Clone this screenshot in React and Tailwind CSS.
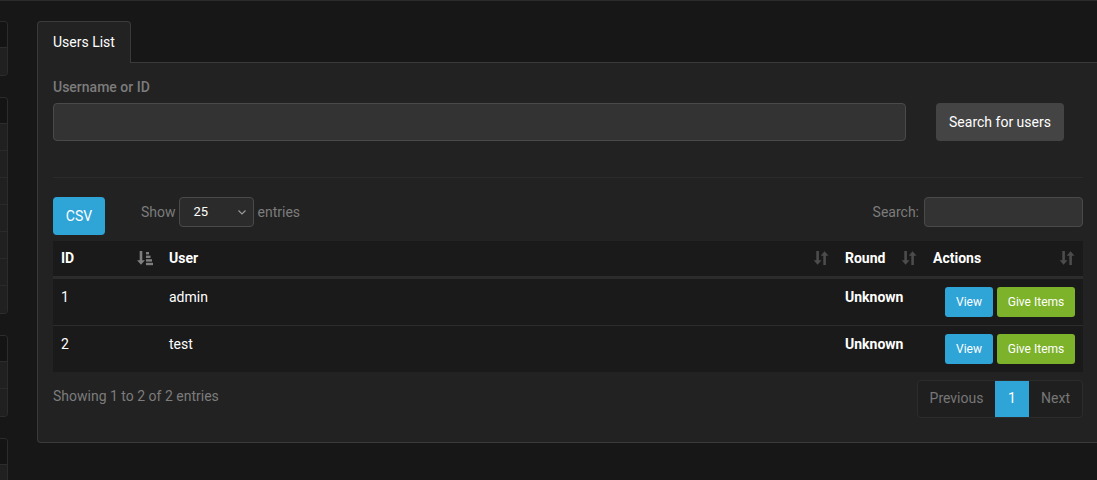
import React from "react";

function SortBoth() {
    return (
        <svg width="16" height="16" viewBox="0 0 16 16" className="text-[#4c4c4c]">
            <path d="M3.3 1h2.6v9.2h2.6l-3.9 4.6-3.9-4.6h2.6z" fill="currentColor" />
            <path d="M10.3 15h2.6v-9.2h2.6l-3.9-4.6-3.9 4.6h2.6z" fill="currentColor" />
        </svg>
    );
}

function SortDesc() {
    return (
        <svg width="16" height="16" viewBox="0 0 16 16" className="text-[#7e7e7e]">
            <path d="M2.7 1h2.6v9.2h2.6l-3.9 4.6-3.9-4.6h2.6z" fill="currentColor" />
            <rect x="9" y="2" width="3" height="2.4" fill="currentColor" />
            <rect x="9" y="5.6" width="4.5" height="2.4" fill="currentColor" />
            <rect x="9" y="9.2" width="6" height="2.4" fill="currentColor" />
            <rect x="9" y="12.8" width="7" height="2.4" fill="currentColor" />
        </svg>
    );
}

function SideCard({ rows }) {
    return (
        <div className="shrink-0 w-[8px] border border-l-0 border-[#2c2c2c] rounded-r-[4px] overflow-hidden">
            <div className="h-[26px] bg-[#141414] border-b border-[#2c2c2c]"></div>
            {Array.from({ length: rows }).map((_, i) => (
                <div key={i} className={"h-[27px] bg-[#202020] " + (i < rows - 1 ? "border-b border-[#2a2a2a]" : "")}></div>
            ))}
        </div>
    );
}

const users = [
    { id: 1, name: "admin", round: "Unknown" },
    { id: 2, name: "test", round: "Unknown" },
];

export default function App() {
    return (
        <div className="h-[480px] w-[1097px] overflow-hidden bg-[#171717] border-t border-[#2b2b2b] flex font-['Roboto',sans-serif] text-[14px]">
            {/* Left cards (clipped) */}
            <div className="w-[8px] shrink-0 flex flex-col gap-[21px] pt-[20px]">
                <SideCard rows={1} />
                <SideCard rows={7} />
                <SideCard rows={2} />
                <SideCard rows={2} />
            </div>

            {/* Main panel */}
            <div className="ml-[29px] w-[1062px] shrink-0 pt-[20px]">
                <div className="flex">
                    <div className="relative z-10 -mb-px h-[42px] px-[15px] flex items-center bg-[#222222] border border-b-0 border-[#3a3a3a] rounded-t-[4px] text-white">
                        Users List
                    </div>
                </div>
                <div className="bg-[#222222] border border-r-0 border-[#3a3a3a] rounded-bl-[4px] pl-[15px] pr-[16px] pt-[14px] pb-[24px]">
                    <div className="text-[#7c7c7c] font-medium leading-[20px]">Username or ID</div>
                    <div className="flex mt-[6px]">
                        <input className="flex-1 h-[38px] bg-[#333333] border border-[#4a4a4a] rounded-[4px] outline-none" />
                        <button className="ml-[30px] mr-[19px] w-[128px] h-[38px] bg-[#444444] rounded-[4px] text-white">
                            Search for users
                        </button>
                    </div>
                    <div className="mt-[36px] border-t border-[#2b2b2b]"></div>

                    <div className="mt-[19px] flex items-start">
                        <button className="w-[52px] h-[38px] bg-[#2fa4d7] rounded-[4px] text-white">CSV</button>
                        <div className="ml-[36px] flex items-center text-[#7c7c7c]">
                            <span>Show</span>
                            <div className="ml-[3px] w-[75px] h-[30px] bg-[#2b2b2b] border border-[#4a4a4a] rounded-[4px] flex items-center justify-between pl-[14px] pr-[6px] text-white text-[13px]">
                                <span>25</span>
                                <svg width="10" height="10" viewBox="0 0 10 10" className="text-[#999]">
                                    <path d="M1.5 3.5l3.5 3.5 3.5-3.5" fill="none" stroke="currentColor" strokeWidth="1.2" />
                                </svg>
                            </div>
                            <span className="ml-[4px]">entries</span>
                        </div>
                        <div className="ml-auto flex items-center text-[#7c7c7c]">
                            <span>Search:</span>
                            <input className="ml-[5px] w-[159px] h-[30px] bg-[#333333] border border-[#4a4a4a] rounded-[4px] outline-none" />
                        </div>
                    </div>

                    <table className="mt-[6px] w-full border-collapse text-white">
                        <thead>
                            <tr className="h-[36px] bg-[#1a1a1a] border-b-[3px] border-[#2c2c2c] font-bold">
                                <th className="w-[108px] px-[8px] text-left">
                                    <div className="flex items-center justify-between">ID <SortDesc /></div>
                                </th>
                                <th className="px-[8px] text-left">
                                    <div className="flex items-center justify-between">User <SortBoth /></div>
                                </th>
                                <th className="w-[88px] px-[8px] text-left">
                                    <div className="flex items-center justify-between">Round <SortBoth /></div>
                                </th>
                                <th className="w-[158px] px-[8px] text-left">
                                    <div className="flex items-center justify-between">Actions <SortBoth /></div>
                                </th>
                            </tr>
                        </thead>
                        <tbody>
                            {users.map((u, i) => (
                                <tr key={u.id} className={"bg-[#1a1a1a] " + (i < users.length - 1 ? "border-b border-[#2c2c2c]" : "")}>
                                    <td className="px-[8px] py-[8px] align-top leading-[20px]">{u.id}</td>
                                    <td className="px-[8px] py-[8px] align-top leading-[20px]">{u.name}</td>
                                    <td className="px-[8px] py-[8px] align-top leading-[20px] font-bold">{u.round}</td>
                                    <td className="px-[8px] py-[8px] align-top">
                                        <div className="flex justify-end gap-[4px]">
                                            <button className="w-[48px] h-[30px] bg-[#2fa4d7] rounded-[3px] text-white text-[12px]">View</button>
                                            <button className="w-[78px] h-[30px] bg-[#7db22b] rounded-[3px] text-white text-[12px]">Give Items</button>
                                        </div>
                                    </td>
                                </tr>
                            ))}
                        </tbody>
                    </table>

                    <div className="mt-[8px] flex items-start justify-between">
                        <div className="pt-[6px] text-[#7c7c7c] leading-[20px]">Showing 1 to 2 of 2 entries</div>
                        <div className="flex h-[38px] border border-[#2c2c2c] rounded-[4px] overflow-hidden bg-[#1f1f1f]">
                            <span className="w-[77px] flex items-center justify-center text-[#777777]">Previous</span>
                            <span className="w-[34px] flex items-center justify-center bg-[#2fa4d7] text-white">1</span>
                            <span className="w-[53px] flex items-center justify-center text-[#777777]">Next</span>
                        </div>
                    </div>
                </div>
            </div>
        </div>
    );
}
